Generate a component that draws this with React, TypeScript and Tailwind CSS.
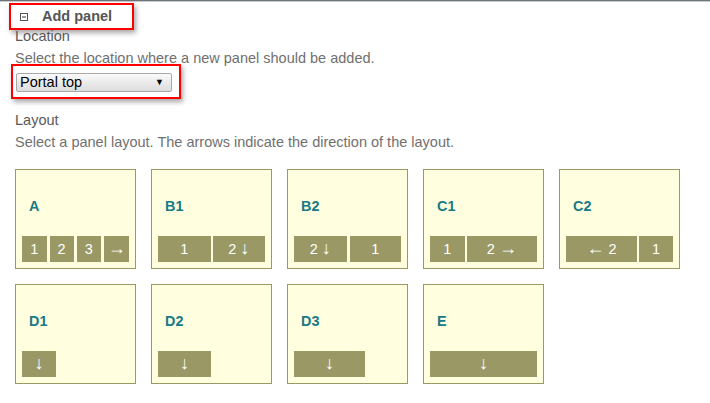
import React from "react";

type Bar = { label: string; w: number };
type Layout = { name: string; gap: number; bars: Bar[] };

const layouts: Layout[] = [
  { name: "A", gap: 3, bars: [{ label: "1", w: 25 }, { label: "2", w: 24 }, { label: "3", w: 25 }, { label: "→", w: 25 }] },
  { name: "B1", gap: 2, bars: [{ label: "1", w: 53 }, { label: "2 ↓", w: 53 }] },
  { name: "B2", gap: 3, bars: [{ label: "2 ↓", w: 53 }, { label: "1", w: 52 }] },
  { name: "C1", gap: 2, bars: [{ label: "1", w: 35 }, { label: "2 →", w: 71 }] },
  { name: "C2", gap: 2, bars: [{ label: "← 2", w: 71 }, { label: "1", w: 34 }] },
  { name: "D1", gap: 0, bars: [{ label: "↓", w: 34 }] },
  { name: "D2", gap: 0, bars: [{ label: "↓", w: 53 }] },
  { name: "D3", gap: 0, bars: [{ label: "↓", w: 71 }] },
  { name: "E", gap: 0, bars: [{ label: "↓", w: 108 }] },
];

// arrows render tiny in the body font, so give them their own size
const BarLabel = ({ text }: { text: string }) => (
  <>
    {text.split("").map((ch, i) =>
      "←→↓".includes(ch) ? (
        <span key={i} className="relative top-[-1px] text-[18px] leading-none">
          {ch}
        </span>
      ) : (
        <span key={i} className="whitespace-pre">{ch}</span>
      )
    )}
  </>
);

const LayoutCard = ({ layout }: { layout: Layout }) => (
  <div className="flex h-[100px] w-[121px] flex-col border border-[#9a9966] bg-[#ffffe0] p-[6px]">
    <div className="flex flex-1 items-center pl-[7px] pt-[1px] text-[14.4px] font-bold text-[#177a86]">
      {layout.name}
    </div>
    <div className="flex h-[26px]" style={{ gap: layout.gap }}>
      {layout.bars.map((bar, i) => (
        <div
          key={i}
          className="flex h-full items-center justify-center bg-[#9a9966] text-[14.5px] leading-none text-white"
          style={{ width: bar.w }}
        >
          <BarLabel text={bar.label} />
        </div>
      ))}
    </div>
  </div>
);

const CollapseIcon = () => (
  <svg width="8" height="8" viewBox="0 0 8 8" className="shrink-0">
    <rect x="0.5" y="0.5" width="7" height="7" fill="white" stroke="#555" />
    <line x1="2" y1="4" x2="6" y2="4" stroke="#333" />
  </svg>
);

export default function App() {
  return (
    <div className="min-h-[403px] w-[710px] bg-white font-['Liberation_Sans',Arial,sans-serif] text-[14.5px]">
      <div className="h-px bg-[#6d7478]" />
      <div className="h-px bg-[#c9cbcc]" />

      <div className="ml-[9px] mt-px flex h-[27px] w-[125px] items-center border-2 border-[#ff0000] pl-[9px] shadow-[2px_3px_5px_rgba(0,0,0,0.35)]">
        <CollapseIcon />
        <span className="ml-[14px] font-bold leading-none text-[#555]">Add panel</span>
      </div>

      <div className="mt-[-5px] pl-[15px] leading-[22px] text-[#595959]">Location</div>
      <div className="pl-[15px] leading-[22px] text-[#707070]">
        Select the location where a new panel should be added.
      </div>

      <div className="ml-[11px] mt-[-5px] h-[35px] w-[170px] border-2 border-[#ff0000] pl-[3px] pt-[7px] shadow-[2px_3px_5px_rgba(0,0,0,0.35)]">
        <div className="flex h-[19px] w-[156px] items-center justify-between rounded-[2px] border border-[#a8a8a8] bg-gradient-to-b from-[#fafafa] to-[#dcdcdc] pl-[3px] pr-[7px] text-black">
          <span className="leading-none">Portal top</span>
          <span className="text-[9px] leading-none">▼</span>
        </div>
      </div>

      <div className="mt-[10px] pl-[15px] leading-[22px] text-[#595959]">Layout</div>
      <div className="pl-[15px] leading-[22px] text-[#707070]">
        Select a panel layout. The arrows indicate the direction of the layout.
      </div>

      <div className="ml-[15px] mt-[16px] flex w-[680px] flex-wrap gap-x-[15px] gap-y-[15px]">
        {layouts.map((l) => (
          <LayoutCard key={l.name} layout={l} />
        ))}
      </div>
    </div>
  );
}
